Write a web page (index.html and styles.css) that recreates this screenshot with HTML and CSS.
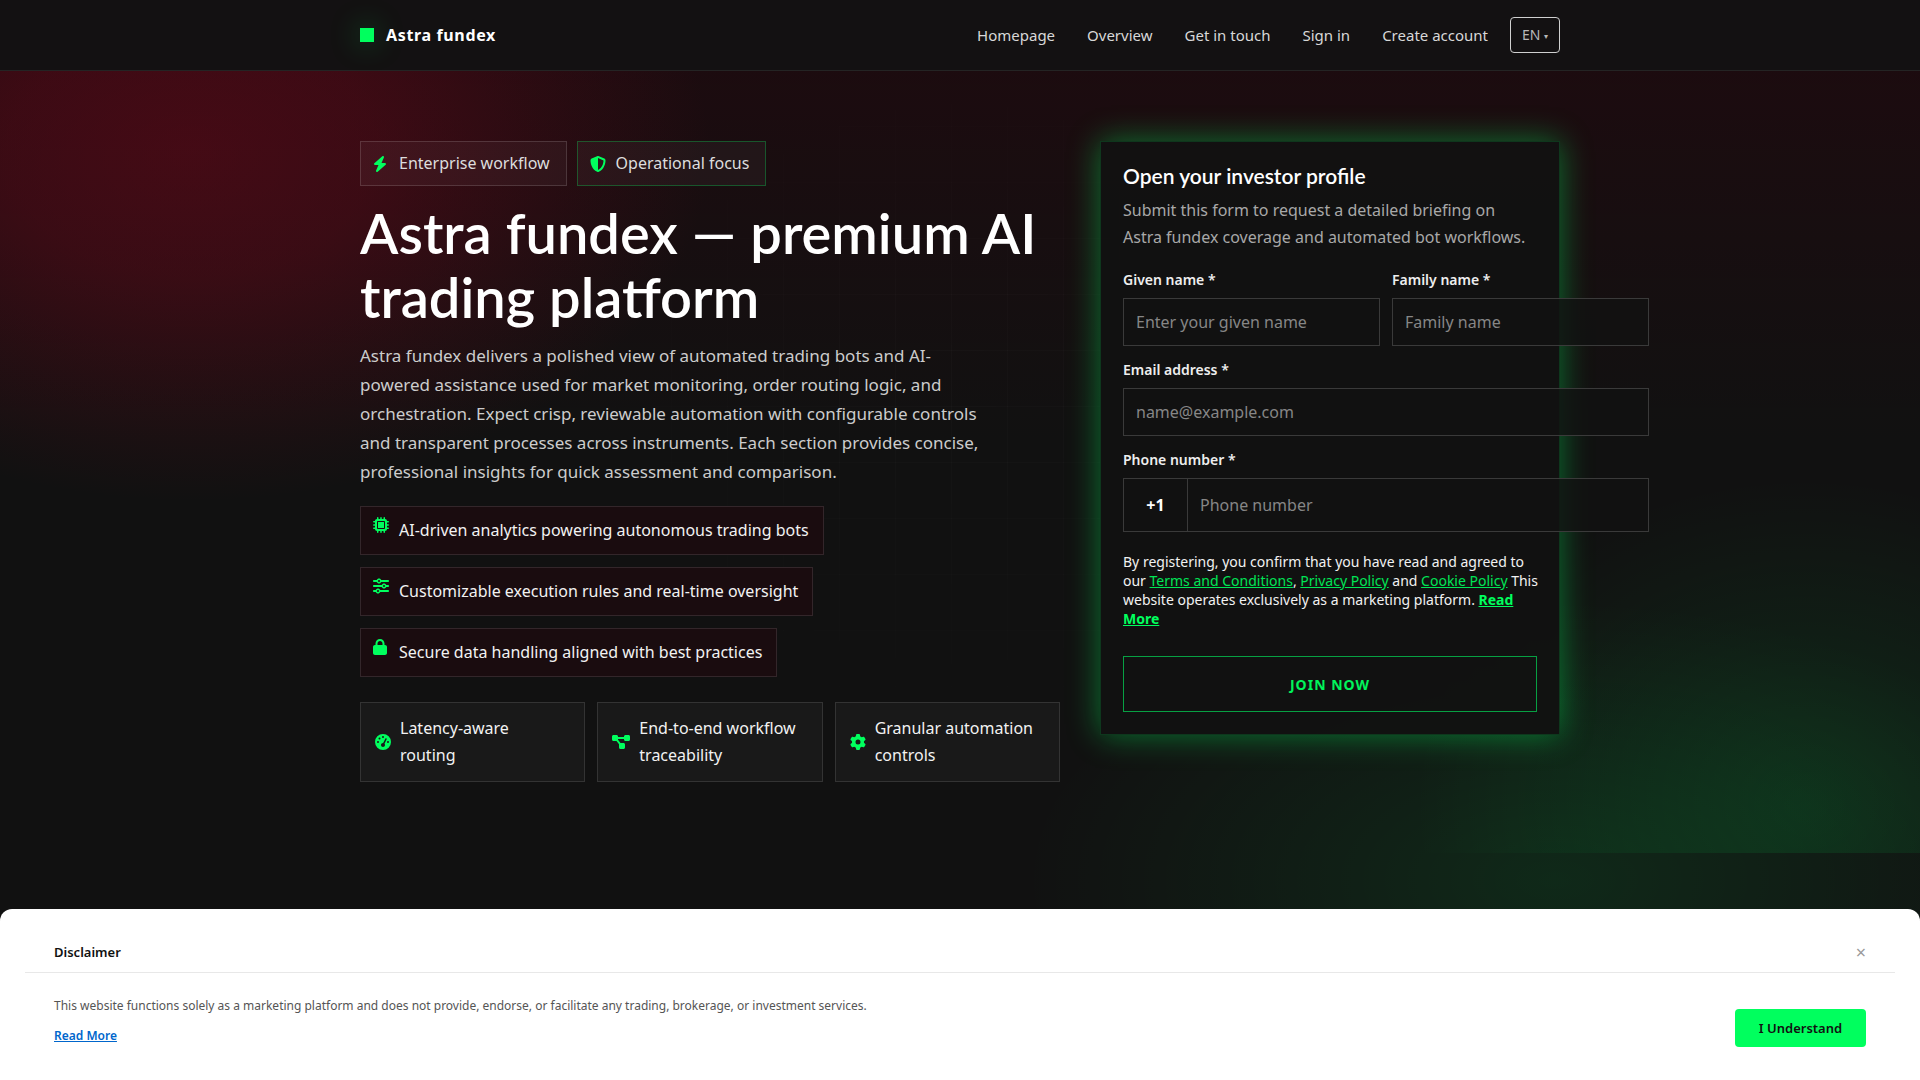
FILE: index.html
```html
<!DOCTYPE html>
<html lang="en">
<head>
  <meta charset="UTF-8">
  <meta name="viewport" content="width=device-width, initial-scale=1">
  <title>Astra fundex</title>
  <link rel="stylesheet" href="styles.css">
</head>
<body>

  <header class="site-header">
    <div class="container header-inner">
      <a class="brand" href="#"><span class="brand-mark"></span>Astra fundex</a>
      <nav class="nav">
        <a href="#">Homepage</a>
        <a href="#">Overview</a>
        <a href="#">Get in touch</a>
        <a href="#">Sign in</a>
        <a href="#">Create account</a>
      </nav>
      <button class="lang" type="button">EN <span class="caret">▾</span></button>
    </div>
  </header>

  <main class="hero">
    <div class="container hero-grid">
      <section class="intro">
        <div class="badges">
          <span class="badge">
            <svg class="icon" viewBox="0 0 448 512"><path d="M349.400 44.600c5.900-13.700 1.500-29.700-10.600-38.500s-28.600-8-39.900 1.800l-256 224c-10 8.800-13.600 22.900-8.900 35.300S50.700 288 64 288H175.500L98.600 467.400c-5.900 13.700-1.500 29.700 10.600 38.500s28.600 8 39.900-1.800l256-224c10-8.800 13.600-22.900 8.900-35.300s-16.600-20.700-30-20.700H272.500L349.400 44.600z"/></svg>
            Enterprise workflow
          </span>
          <span class="badge badge-green">
            <svg class="icon" viewBox="0 0 512 512"><path d="M256 0c4.600 0 9.200 1 13.400 2.900L457.700 82.800c22 9.300 38.400 31 38.300 57.200c-.5 99.200-41.300 280.700-213.600 363.200c-16.700 8-36.100 8-52.800 0C57.300 420.700 16.500 239.200 16 140c-.1-26.200 16.300-47.900 38.300-57.200L242.700 2.900C246.800 1 251.400 0 256 0zm0 66.800V444.800C394 378 431.100 230.100 432 141.400L256 66.800z"/></svg>
            Operational focus
          </span>
        </div>

        <h1>Astra fundex — premium AI trading platform</h1>
        <p class="lead">Astra fundex delivers a polished view of automated trading bots and AI-powered assistance used for market monitoring, order routing logic, and orchestration. Expect crisp, reviewable automation with configurable controls and transparent processes across instruments. Each section provides concise, professional insights for quick assessment and comparison.</p>

        <ul class="features">
          <li>
            <svg class="icon" viewBox="0 0 512 512"><path d="M176 24c0-13.300-10.700-24-24-24s-24 10.700-24 24V64c-35.300 0-64 28.700-64 64H24c-13.300 0-24 10.700-24 24s10.700 24 24 24H64v56H24c-13.300 0-24 10.700-24 24s10.700 24 24 24H64v56H24c-13.300 0-24 10.700-24 24s10.700 24 24 24H64c0 35.300 28.700 64 64 64v40c0 13.300 10.700 24 24 24s24-10.700 24-24V448h56v40c0 13.300 10.700 24 24 24s24-10.700 24-24V448h56v40c0 13.300 10.700 24 24 24s24-10.700 24-24V448c35.300 0 64-28.700 64-64h40c13.300 0 24-10.700 24-24s-10.700-24-24-24H448V280h40c13.300 0 24-10.700 24-24s-10.700-24-24-24H448V176h40c13.300 0 24-10.700 24-24s-10.700-24-24-24H448c0-35.300-28.700-64-64-64V24c0-13.300-10.700-24-24-24s-24 10.700-24 24V64H280V24c0-13.300-10.700-24-24-24s-24 10.700-24 24V64H176V24zM160 128H352c17.700 0 32 14.300 32 32V352c0 17.700-14.300 32-32 32H160c-17.700 0-32-14.300-32-32V160c0-17.700 14.300-32 32-32zm192 32H160V352H352V160z"/></svg>
            AI-driven analytics powering autonomous trading bots
          </li>
          <li>
            <svg class="icon" viewBox="0 0 512 512"><path d="M0 416c0 17.700 14.300 32 32 32l54.700 0c12.300 28.300 40.500 48 73.300 48s61-19.700 73.300-48L480 448c17.700 0 32-14.300 32-32s-14.300-32-32-32l-246.700 0c-12.300-28.300-40.500-48-73.300-48s-61 19.700-73.300 48L32 384c-17.700 0-32 14.300-32 32zm128 0a32 32 0 1 1 64 0 32 32 0 1 1 -64 0zM320 256a32 32 0 1 1 64 0 32 32 0 1 1 -64 0zm32-80c-32.800 0-61 19.700-73.300 48L32 224c-17.700 0-32 14.300-32 32s14.300 32 32 32l246.700 0c12.300 28.300 40.500 48 73.300 48s61-19.700 73.300-48l54.700 0c17.700 0 32-14.300 32-32s-14.300-32-32-32l-54.700 0c-12.300-28.300-40.500-48-73.300-48zM192 128a32 32 0 1 1 0-64 32 32 0 1 1 0 64zm73.300-64C253 35.700 224.800 16 192 16s-61 19.700-73.300 48L32 64C14.300 64 0 78.300 0 96s14.300 32 32 32l86.700 0c12.300 28.300 40.500 48 73.300 48s61-19.700 73.300-48L480 128c17.700 0 32-14.300 32-32s-14.300-32-32-32L265.300 64z"/></svg>
            Customizable execution rules and real-time oversight
          </li>
          <li>
            <svg class="icon" viewBox="0 0 448 512"><path d="M144 144v48H304V144c0-44.200-35.800-80-80-80s-80 35.800-80 80zM80 192V144C80 64.500 144.500 0 224 0s144 64.500 144 144v48h16c35.300 0 64 28.700 64 64V448c0 35.300-28.700 64-64 64H64c-35.300 0-64-28.700-64-64V256c0-35.300 28.700-64 64-64H80z"/></svg>
            Secure data handling aligned with best practices
          </li>
        </ul>

        <div class="stats">
          <div class="stat">
            <svg class="icon" viewBox="0 0 512 512"><path fill-rule="evenodd" d="M0 256a256 256 0 1 1 512 0A256 256 0 1 1 0 256zM288 96a32 32 0 1 0 -64 0 32 32 0 1 0 64 0zM256 416c35.300 0 64-28.700 64-64c0-16.200-6-31.100-16-42.300l69.500-138.900c5.900-11.900 1.100-26.300-10.700-32.200s-26.300-1.100-32.200 10.700L261.100 288.200c-1.700-.1-3.400-.2-5.100-.2c-35.300 0-64 28.700-64 64s28.700 64 64 64zM176 144a32 32 0 1 0 -64 0 32 32 0 1 0 64 0zM96 288a32 32 0 1 0 0-64 32 32 0 1 0 0 64zm352-32a32 32 0 1 0 -64 0 32 32 0 1 0 64 0z"/></svg>
            <span>Latency-aware routing</span>
          </div>
          <div class="stat">
            <svg class="icon" viewBox="0 0 576 512"><path d="M0 80C0 53.500 21.500 32 48 32h96c26.500 0 48 21.500 48 48V96H384V80c0-26.500 21.500-48 48-48h96c26.500 0 48 21.500 48 48v96c0 26.500-21.500 48-48 48H432c-26.500 0-48-21.500-48-48V160H192v16c0 1.700-.1 3.400-.3 5L272 288h96c26.500 0 48 21.500 48 48v96c0 26.500-21.500 48-48 48H272c-26.500 0-48-21.500-48-48V336c0-1.700 .1-3.400 .3-5L144 224H48c-26.500 0-48-21.500-48-48V80z"/></svg>
            <span>End-to-end workflow traceability</span>
          </div>
          <div class="stat">
            <svg class="icon" viewBox="0 0 512 512"><path d="M495.900 166.600c3.200 8.700 .5 18.400-6.400 24.600l-43.300 39.400c1.100 8.300 1.700 16.800 1.700 25.400s-.6 17.100-1.700 25.400l43.300 39.400c6.900 6.200 9.600 15.900 6.400 24.600c-4.400 11.900-9.700 23.300-15.800 34.300l-4.700 8.100c-6.600 11-14 21.400-22.100 31.200c-5.900 7.200-15.700 9.600-24.500 6.800l-55.700-17.700c-13.400 10.300-28.200 18.900-44 25.400l-12.500 57.100c-2 9.100-9 16.300-18.200 17.800c-13.800 2.300-28 3.500-42.500 3.500s-28.700-1.200-42.500-3.500c-9.200-1.500-16.200-8.700-18.200-17.800l-12.500-57.100c-15.800-6.500-30.600-15.100-44-25.400L83.100 425.900c-8.800 2.800-18.600 .3-24.500-6.800c-8.100-9.800-15.500-20.200-22.100-31.200l-4.700-8.100c-6.100-11-11.400-22.400-15.800-34.300c-3.200-8.700-.5-18.400 6.400-24.600l43.300-39.400C64.600 273.100 64 264.600 64 256s.6-17.100 1.700-25.400L22.400 191.200c-6.900-6.200-9.600-15.900-6.400-24.600c4.400-11.900 9.700-23.300 15.800-34.300l4.700-8.100c6.600-11 14-21.400 22.100-31.200c5.900-7.200 15.700-9.600 24.500-6.800l55.700 17.700c13.400-10.300 28.200-18.900 44-25.400l12.500-57.100c2-9.100 9-16.300 18.200-17.800C227.300 1.200 241.500 0 256 0s28.700 1.200 42.500 3.500c9.200 1.500 16.200 8.700 18.200 17.800l12.500 57.100c15.800 6.500 30.600 15.100 44 25.400l55.700-17.700c8.800-2.800 18.600-.3 24.500 6.800c8.100 9.800 15.500 20.200 22.100 31.200l4.700 8.100c6.100 11 11.400 22.400 15.800 34.300zM256 336a80 80 0 1 0 0-160 80 80 0 1 0 0 160z"/></svg>
            <span>Granular automation controls</span>
          </div>
        </div>
      </section>

      <section class="form-card">
        <h2>Open your investor profile</h2>
        <p class="form-text">Submit this form to request a detailed briefing on Astra fundex coverage and automated bot workflows.</p>

        <form>
          <div class="fields">
            <div class="field">
              <label for="firstName">Given name *</label>
              <input id="firstName" type="text" placeholder="Enter your given name">
            </div>
            <div class="field">
              <label for="lastName">Family name *</label>
              <input id="lastName" type="text" placeholder="Family name">
            </div>
            <div class="field field-wide">
              <label for="email">Email address *</label>
              <input id="email" type="email" placeholder="name@example.com">
            </div>
            <div class="field field-wide">
              <label for="phone">Phone number *</label>
              <div class="phone">
                <span class="phone-code">+1</span>
                <input id="phone" type="tel" placeholder="Phone number">
              </div>
            </div>
          </div>

          <p class="legal">By registering, you confirm that you have read and agreed to our <a href="#">Terms and Conditions</a>, <a href="#">Privacy Policy</a> and <a href="#">Cookie Policy</a> This website operates exclusively as a marketing platform. <a class="more" href="#">Read More</a></p>
          <button class="submit" type="button">Join now</button>
        </form>
      </section>
    </div>
  </main>

  <aside class="disclaimer">
    <div class="disclaimer-head">
      <strong>Disclaimer</strong>
      <button class="close" type="button" aria-label="Close">×</button>
    </div>
    <div class="disclaimer-body">
      <div class="disclaimer-text">
        <p>This website functions solely as a marketing platform and does not provide, endorse, or facilitate any trading, brokerage, or investment services.</p>
        <a href="#">Read More</a>
      </div>
      <button class="accept" type="button">I Understand</button>
    </div>
  </aside>

</body>
</html>
```
FILE: styles.css
```css
* {
  box-sizing: border-box;
}

html {
  background: #111;
}

body {
  margin: 0;
  min-height: 100vh;
  font: 16px/27px "Noto Sans", sans-serif;
  color: #fff;
  background:
    radial-gradient(760px 400px at 81% 880px, rgba(0, 255, 94, 0.1), transparent 70%),
    linear-gradient(rgba(50, 0, 12, 0.4), transparent 440px);
}

h1, h2, p, ul {
  margin: 0;
}

button, input {
  font: inherit;
}

button {
  cursor: pointer;
}

.container {
  max-width: 1200px;
  margin: 0 auto;
}

.icon {
  flex: none;
  height: 16px;
  fill: #00ff5e;
}

/* header */
.site-header {
  background: #131112;
  border-bottom: 1px solid #242424;
}

.header-inner {
  display: flex;
  align-items: center;
  height: 70px;
}

.brand {
  display: flex;
  align-items: center;
  gap: 12px;
  margin-right: auto;
  color: #fff;
  font-weight: 700;
  letter-spacing: 0.04em;
  text-decoration: none;
}

.brand-mark {
  width: 14px;
  height: 14px;
  background: #00ff5e;
  box-shadow: 0 0 30px rgba(0, 255, 94, 0.4);
}

.nav {
  display: flex;
  gap: 32px;
  margin-right: 22px;
}

.nav a {
  color: #d8d8d8;
  font-size: 15px;
  line-height: 24px;
  text-decoration: none;
}

.lang {
  width: 50px;
  height: 36px;
  padding: 0;
  border: 1px solid #d0d0d0;
  border-radius: 4px;
  background: none;
  color: #b8b8b8;
  font-size: 14px;
}

.caret {
  font-size: 8px;
  vertical-align: 1px;
}

/* hero */
.hero {
  position: relative;
  padding: 70px 0;
  background:
    radial-gradient(740px 500px at 10% 80px, rgba(120, 8, 28, 0.45), rgba(120, 8, 28, 0.36) 25%, rgba(120, 8, 28, 0.17) 48%, transparent 70%),
    radial-gradient(560px 470px at 94% 94%, rgba(0, 255, 94, 0.11), transparent 70%);
}

/* faint grid lines, fading out from the middle */
.hero::before {
  content: "";
  position: absolute;
  inset: 0;
  background:
    linear-gradient(90deg, transparent 55px, rgba(255, 255, 255, 0.02) 55px) 0 0 / 56px 56px,
    linear-gradient(transparent 55px, rgba(255, 255, 255, 0.02) 55px) 0 0 / 56px 56px;
  mask-image: radial-gradient(440px 400px at 50% 40%, #000, transparent);
  pointer-events: none;
}

.hero-grid {
  position: relative;
  display: grid;
  grid-template-columns: 1fr 460px;
  gap: 40px;
  align-items: start;
  min-height: 642px;
}

.badges {
  display: flex;
  gap: 10px;
}

.badge {
  display: grid;
  grid-template-columns: 16px auto;
  align-items: center;
  justify-items: start;
  gap: 10px;
  padding: 8px 16px 8px 12px;
  border: 1px solid rgba(255, 255, 255, 0.14);
  background: rgba(255, 255, 255, 0.04);
  color: #ddd;
}

.badge-green {
  border-color: rgba(0, 255, 94, 0.28);
}

h1 {
  margin-top: 15px;
  font: 600 56px/64px Lato, sans-serif;
}

.lead {
  max-width: 620px;
  margin-top: 12px;
  font-size: 17px;
  line-height: 29px;
  color: #ccc;
}

.features {
  display: flex;
  flex-direction: column;
  align-items: flex-start;
  gap: 12px;
  margin-top: 20px;
  padding: 0;
  list-style: none;
}

.features li {
  display: grid;
  grid-template-columns: 16px auto;
  justify-items: start;
  gap: 10px;
  padding: 10px 14px 10px 12px;
  border: 1px solid #33262a;
  background: #1a0c0f;
  color: #f2f2f2;
}

.stats {
  display: grid;
  grid-template-columns: repeat(3, 1fr);
  gap: 12px;
  margin-top: 25px;
}

.stat {
  display: flex;
  align-items: center;
  gap: 9px;
  padding: 12px 18px 12px 14px;
  border: 1px solid #333;
  background: #191919;
  color: #f2f2f2;
}

/* form */
.form-card {
  padding: 22px;
  border: 1px solid rgba(0, 255, 94, 0.16);
  background: rgba(17, 17, 17, 0.92);
  box-shadow: 0 0 30px rgba(0, 255, 94, 0.42);
}

h2 {
  font: 600 21px/24px Lato, sans-serif;
}

.form-text {
  margin: 9px 0 17px;
  color: #a8a8a8;
}

/* the fields are wider than the card and run past its right edge */
.fields {
  display: grid;
  grid-template-columns: 257px 257px;
  gap: 12px;
}

.field {
  display: flex;
  flex-direction: column;
  gap: 6px;
}

.field-wide {
  grid-column: span 2;
}

label {
  font-size: 14px;
  line-height: 24px;
  font-weight: 600;
  color: #eee;
}

input {
  width: 100%;
  height: 48px;
  padding: 0 12px;
  border: 1px solid #3a3a3a;
  border-radius: 0;
  background: rgba(17, 17, 17, 0.8);
  color: #fff;
}

input::placeholder {
  color: #868686;
}

.phone {
  display: flex;
  height: 54px;
  border: 1px solid #3a3a3a;
  background: rgba(17, 17, 17, 0.8);
}

.phone input {
  height: 100%;
  border: 0;
  background: none;
}

.phone-code {
  flex: none;
  width: 64px;
  border-right: 1px solid #3a3a3a;
  font-weight: 700;
  line-height: 52px;
  text-align: center;
}

.legal {
  margin: 20px -8px 28px 0;
  font-size: 14px;
  line-height: 19px;
  color: #f2f2f2;
}

.legal a {
  color: #00e556;
}

.legal .more {
  color: #00ff5e;
  font-weight: 700;
}

.submit {
  width: 100%;
  height: 56px;
  border: 1px solid #07a043;
  background: none;
  color: #00f55b;
  font-size: 14px;
  font-weight: 700;
  letter-spacing: 1px;
  text-transform: uppercase;
}

/* disclaimer */
.disclaimer {
  position: fixed;
  right: 0;
  bottom: 0;
  left: 0;
  padding: 23px 25px 33px;
  border-radius: 12px 12px 0 0;
  background: #fff;
  color: #111;
}

.disclaimer-head {
  display: flex;
  justify-content: space-between;
  align-items: center;
  height: 41px;
  padding: 0 29px;
  border-bottom: 1px solid #e8e8e8;
  font-size: 13px;
}

.disclaimer strong {
  font-weight: 600;
}

.close {
  padding: 0;
  border: 0;
  background: none;
  color: #999;
  font-size: 18px;
}

.disclaimer-body {
  display: flex;
  justify-content: space-between;
  align-items: flex-end;
  padding: 23px 29px 0;
  font-size: 12px;
  line-height: 20px;
}

.disclaimer-text {
  padding-bottom: 1px;
}

.disclaimer-text p {
  margin-bottom: 10px;
  color: #555;
}

.disclaimer-text a {
  color: #0066cc;
  font-weight: 600;
}

.accept {
  width: 131px;
  height: 38px;
  padding: 0;
  border: 0;
  border-radius: 4px;
  background: #00ff5e;
  color: #111;
  font-size: 13px;
  font-weight: 600;
}
```
